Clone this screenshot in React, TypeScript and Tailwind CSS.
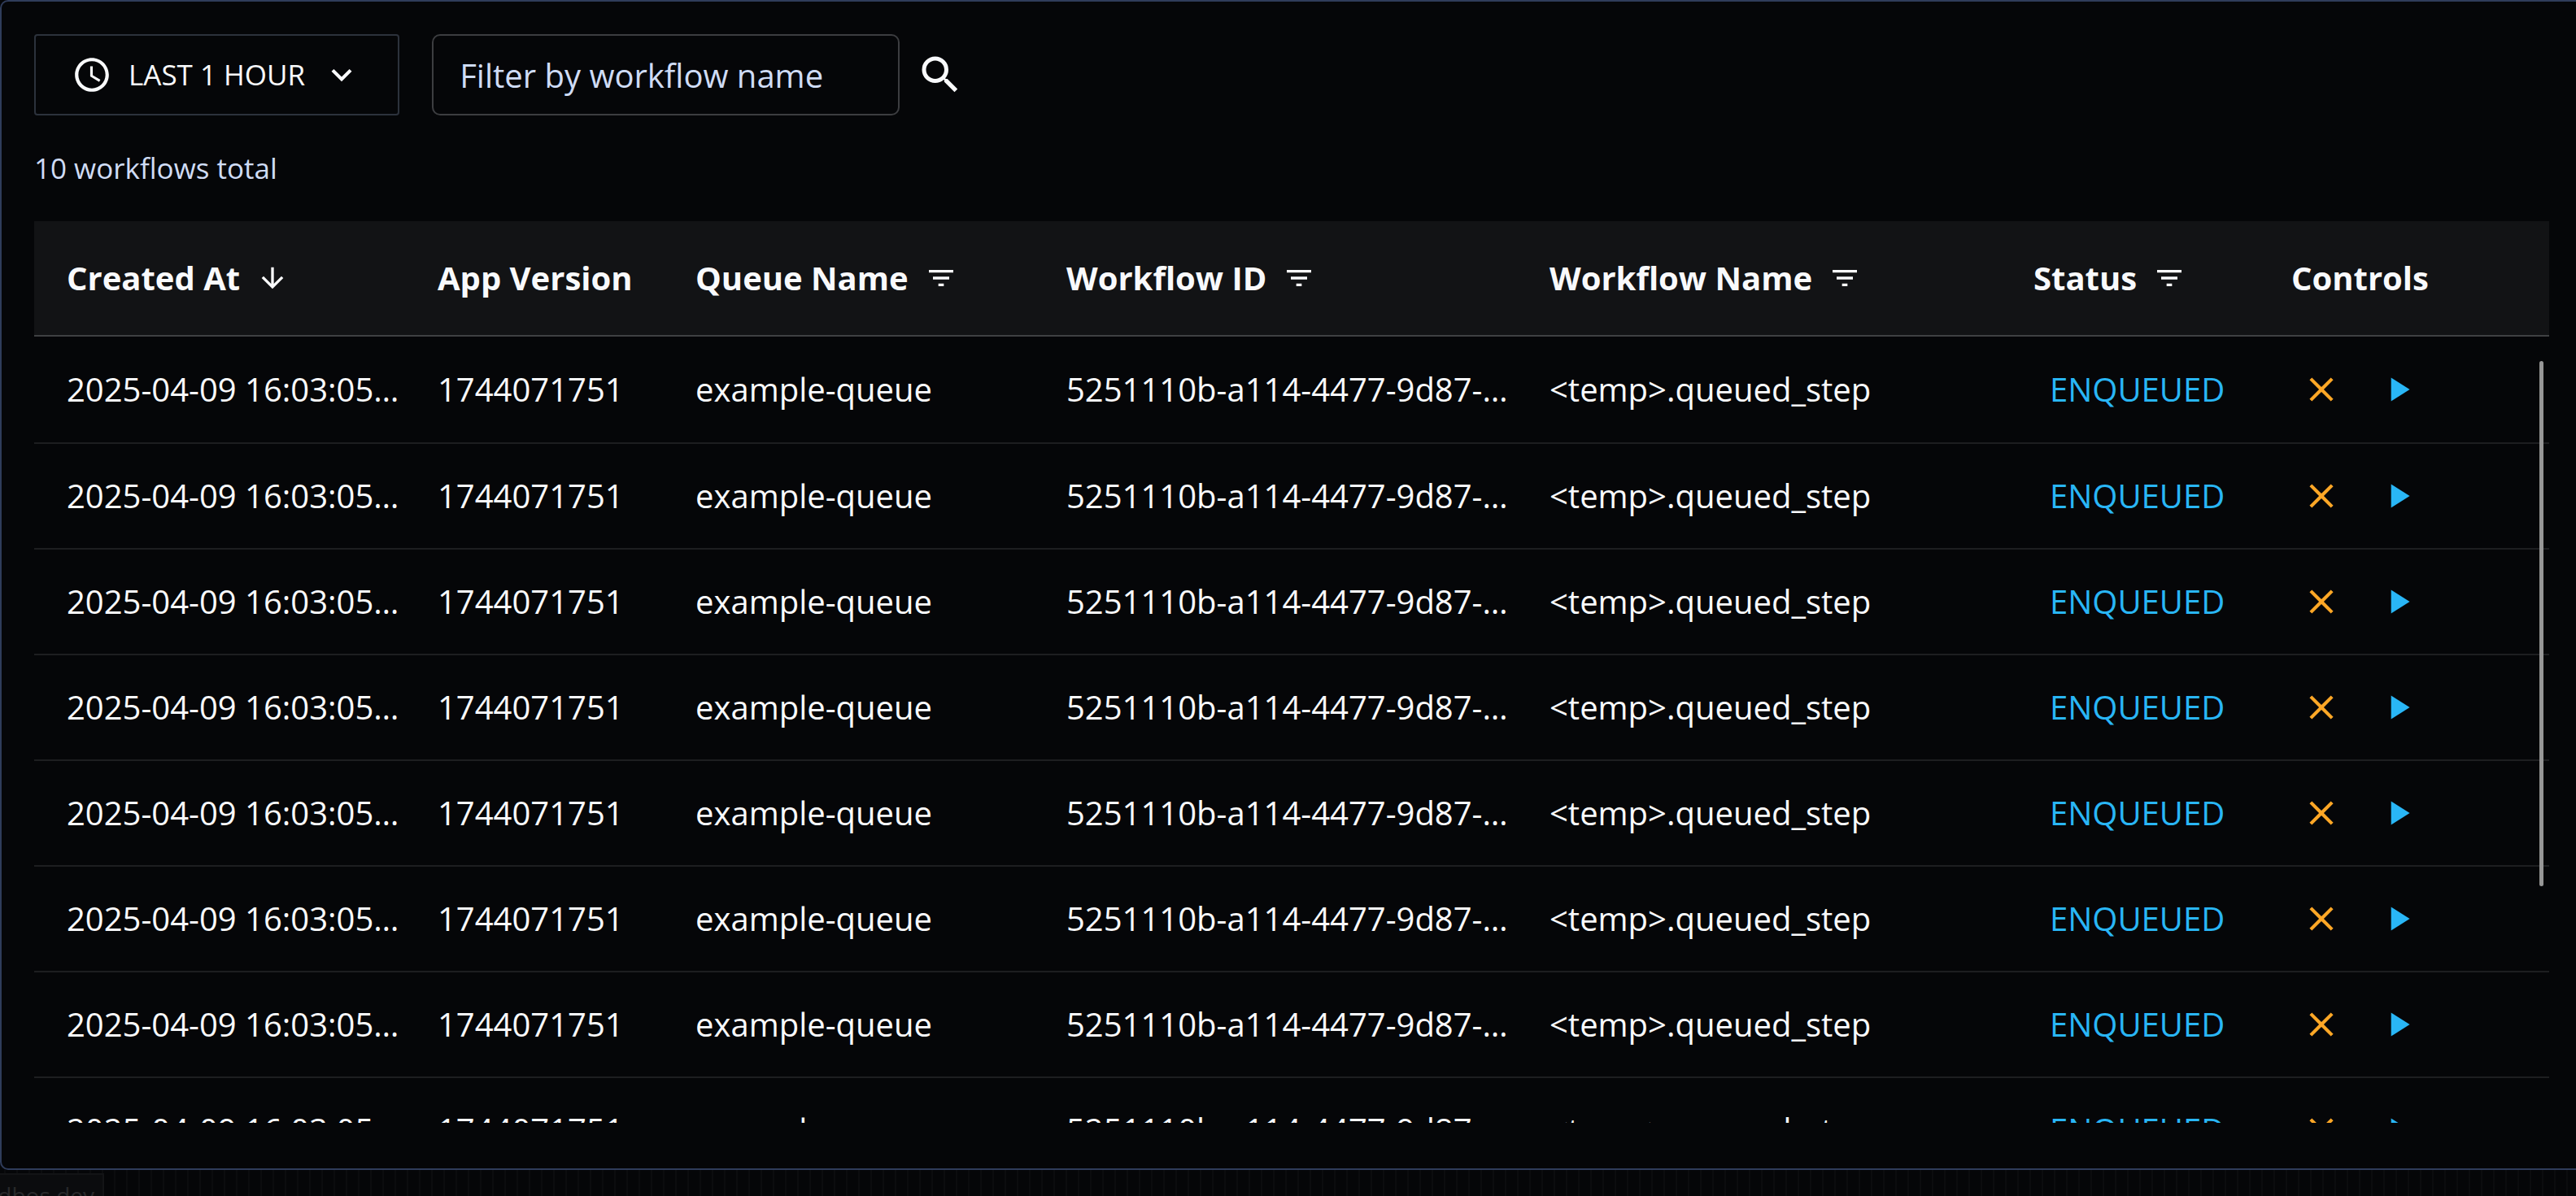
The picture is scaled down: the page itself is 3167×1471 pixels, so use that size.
import {
  MdAccessTime,
  MdArrowDownward,
  MdClose,
  MdFilterList,
  MdKeyboardArrowDown,
  MdPlayArrow,
  MdSearch,
} from "react-icons/md";

type Column = {
  label: string;
  width: string;
  icon?: "sort" | "filter";
};

const columns: Column[] = [
  { label: "Created At", width: "w-[456px]", icon: "sort" },
  { label: "App Version", width: "w-[317px]" },
  { label: "Queue Name", width: "w-[456px]", icon: "filter" },
  { label: "Workflow ID", width: "w-[594px]", icon: "filter" },
  { label: "Workflow Name", width: "w-[595px]", icon: "filter" },
  { label: "Status", width: "w-[317px]", icon: "filter" },
  { label: "Controls", width: "w-[357px]" },
];

const workflows = Array.from({ length: 10 }, (_, i) => ({
  key: i,
  createdAt: "2025-04-09 16:03:05…",
  appVersion: "1744071751",
  queueName: "example-queue",
  workflowId: "5251110b-a114-4477-9d87-…",
  workflowName: "<temp>.queued_step",
  status: "ENQUEUED",
}));

function Toolbar() {
  return (
    <div className="flex items-center gap-5">
      <button
        type="button"
        className="mr-5 flex h-[100px] items-center gap-5 rounded-sm border-2 border-[#2c323c] px-11 text-[35px] font-medium"
      >
        <MdAccessTime size={50} aria-hidden />
        LAST 1 HOUR
        <MdKeyboardArrowDown size={50} aria-hidden />
      </button>
      <input
        type="text"
        aria-label="Filter by workflow name"
        placeholder="Filter by workflow name"
        className="h-[100px] w-[575px] rounded-[10px] border-2 border-[#3c3d40] bg-transparent px-8 text-[40px] placeholder:text-[#cfdcf5]"
      />
      <button type="button" aria-label="Search">
        <MdSearch size={60} />
      </button>
    </div>
  );
}

function WorkflowTable() {
  return (
    <div className="relative mt-10 min-h-0 flex-1">
      <div className="h-full overflow-hidden">
        <table className="w-full table-fixed border-separate border-spacing-0 text-left text-[40px]">
          <thead>
            <tr>
              {columns.map((col) => (
                <th
                  key={col.label}
                  scope="col"
                  className={`sticky top-0 h-[142px] border-b-2 border-[#3f4143] bg-[#121315] py-0 pl-10 font-bold whitespace-nowrap ${col.width}`}
                >
                  <div className="flex items-center gap-5">
                    {col.label}
                    {col.icon === "sort" && (
                      <button type="button" aria-label={`Sort by ${col.label}`}>
                        <MdArrowDownward size={40} />
                      </button>
                    )}
                    {col.icon === "filter" && (
                      <button type="button" aria-label={`Filter by ${col.label}`}>
                        <MdFilterList size={40} />
                      </button>
                    )}
                  </div>
                </th>
              ))}
            </tr>
          </thead>
          <tbody className="[&_td]:h-[130px] [&_td]:border-b-2 [&_td]:border-[#1d1e20] [&_td]:py-0 [&_td]:pl-10 [&_td]:whitespace-nowrap [&_tr:first-child_td]:h-[132px]">
            {workflows.map((wf) => (
              <tr key={wf.key}>
                <td>{wf.createdAt}</td>
                <td>{wf.appVersion}</td>
                <td>{wf.queueName}</td>
                <td>{wf.workflowId}</td>
                <td>{wf.workflowName}</td>
                <td>
                  <span className="px-5 text-[#29b6f6]">{wf.status}</span>
                </td>
                <td>
                  <div className="flex gap-5">
                    <button type="button" aria-label="Cancel workflow" className="p-3 text-[#ffa726]">
                      <MdClose size={50} />
                    </button>
                    <button type="button" aria-label="Start workflow" className="p-3 text-[#29b6f6]">
                      <MdPlayArrow size={50} />
                    </button>
                  </div>
                </td>
              </tr>
            ))}
          </tbody>
        </table>
      </div>

      {/* Scroll thumb */}
      <div className="absolute top-[172px] right-[7px] h-[646px] w-[5px] rounded-full bg-[#969696]" />
    </div>
  );
}

export default function App() {
  return (
    <div className="flex h-screen flex-col overflow-hidden bg-[#050608] font-['Open_Sans','Noto_Sans',sans-serif] text-[#f9fafc]">
      <main className="flex min-h-0 flex-1 flex-col rounded-l-[10px] border-y-2 border-l-2 border-[#2f3c5a] pt-10 pr-[33px] pb-14 pl-10">
        <Toolbar />
        <p className="mt-10 text-[35px] leading-[50px] text-[#cfdcf5]">10 workflows total</p>
        <WorkflowTable />
      </main>

      {/* Status strip */}
      <footer className="h-8 overflow-hidden bg-[repeating-linear-gradient(90deg,transparent_0px_5px,#0b0c0e_5px_7px,transparent_7px_15px)] pt-1">
        <div className="flex w-32 justify-end border-t-2 border-r-2 border-[#131416] bg-[#0b0c0e] pt-1 pr-2.5 text-[28px] leading-[42px] text-[#28292b]">
          dbos.dev
        </div>
      </footer>
    </div>
  );
}
